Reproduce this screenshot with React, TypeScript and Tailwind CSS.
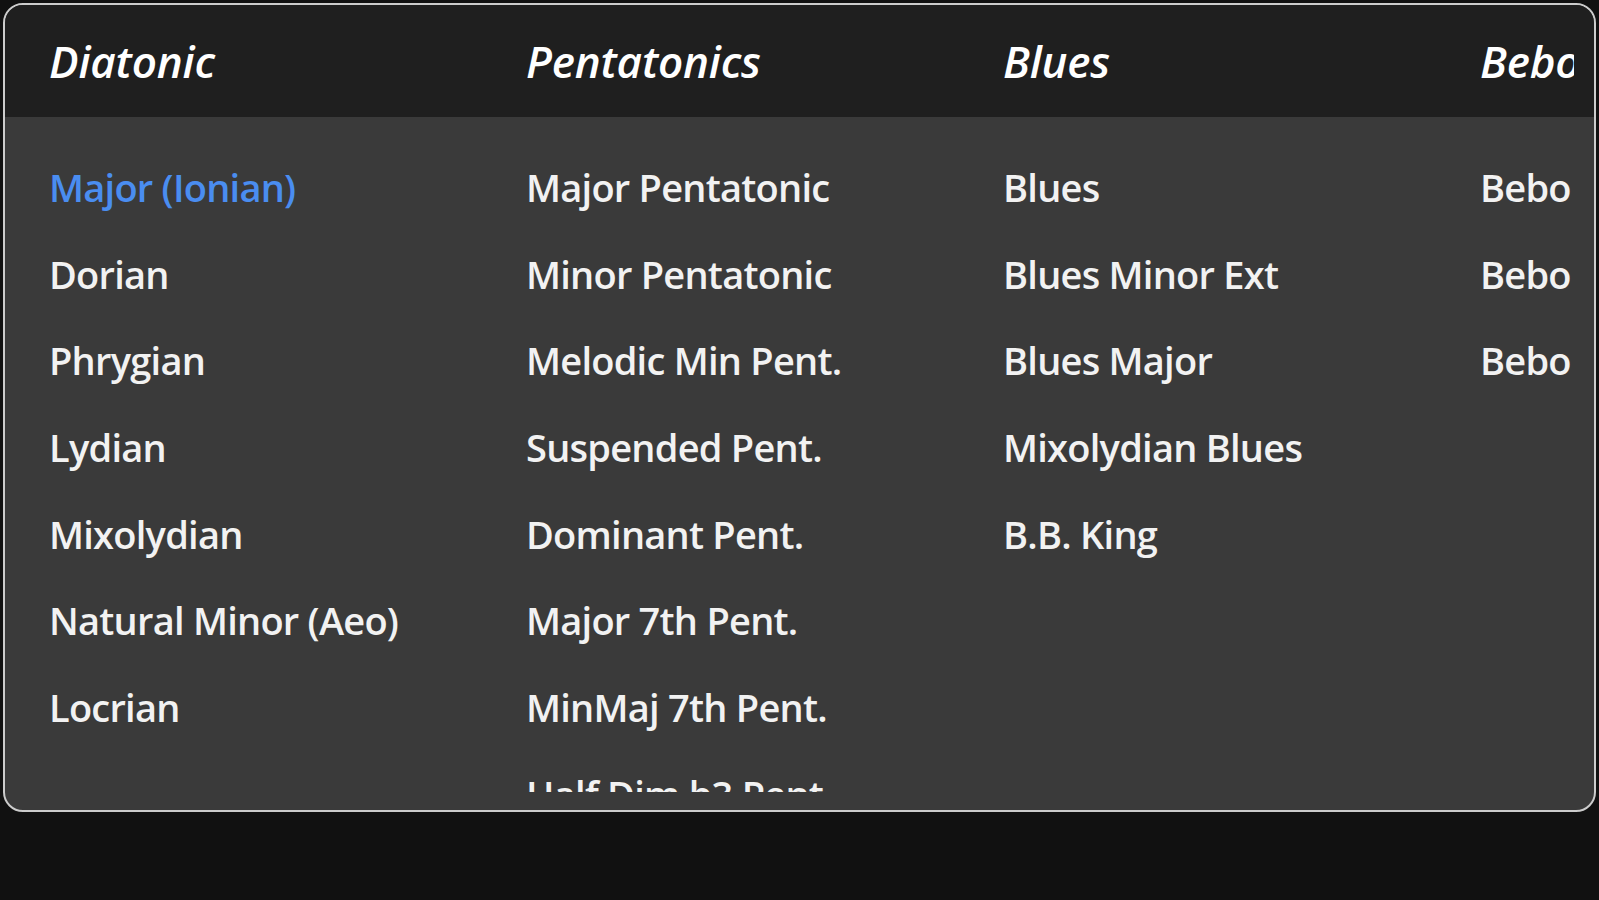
const columns = [
  {
    title: "Diatonic",
    items: [
      "Major (Ionian)",
      "Dorian",
      "Phrygian",
      "Lydian",
      "Mixolydian",
      "Natural Minor (Aeo)",
      "Locrian",
    ],
  },
  {
    title: "Pentatonics",
    items: [
      "Major Pentatonic",
      "Minor Pentatonic",
      "Melodic Min Pent.",
      "Suspended Pent.",
      "Dominant Pent.",
      "Major 7th Pent.",
      "MinMaj 7th Pent.",
      "Half Dim b3 Pent.",
    ],
  },
  {
    title: "Blues",
    items: ["Blues", "Blues Minor Ext", "Blues Major", "Mixolydian Blues", "B.B. King"],
  },
  {
    title: "Bebop",
    items: ["Bebop Major", "Bebop Dominant", "Bebop Minor"],
  },
];

const selected = "Major (Ionian)";

export default function App() {
  return (
    <main
      className="h-[900px] bg-[#111111] p-[3px] text-[#f2f2f2]"
      style={{ fontFamily: '"Open Sans", "Noto Sans", sans-serif' }}
    >
      <div className="flex h-[809px] flex-col overflow-hidden rounded-[20px] border-2 border-[#cccccc] bg-[#3a3a3a]">
        <header className="h-[112px] shrink-0 bg-[#1f1f1f] pr-[20px]">
          <div className="flex h-full items-center overflow-hidden pl-[44px]">
            {columns.map((column) => (
              <h2
                key={column.title}
                className="w-[477px] shrink-0 whitespace-nowrap text-[44px] font-semibold italic tracking-[-0.2px] text-white"
              >
                {column.title}
              </h2>
            ))}
          </div>
        </header>

        <div className="min-h-0 flex-1 pb-[18px] pr-[23px]">
          <div className="flex h-full overflow-hidden pl-[44px] pt-[27px]">
            {columns.map((column) => (
              <ul key={column.title} className="w-[477px] shrink-0">
                {column.items.map((item) => (
                  <li
                    key={item}
                    className={
                      item === selected
                        ? "flex h-[86.7px] items-center whitespace-nowrap text-[38px] font-semibold tracking-[-0.75px] text-[#4a8df0]"
                        : "flex h-[86.7px] items-center whitespace-nowrap text-[38px] font-semibold tracking-[-0.75px]"
                    }
                  >
                    {item}
                  </li>
                ))}
              </ul>
            ))}
          </div>
        </div>
      </div>
    </main>
  );
}
